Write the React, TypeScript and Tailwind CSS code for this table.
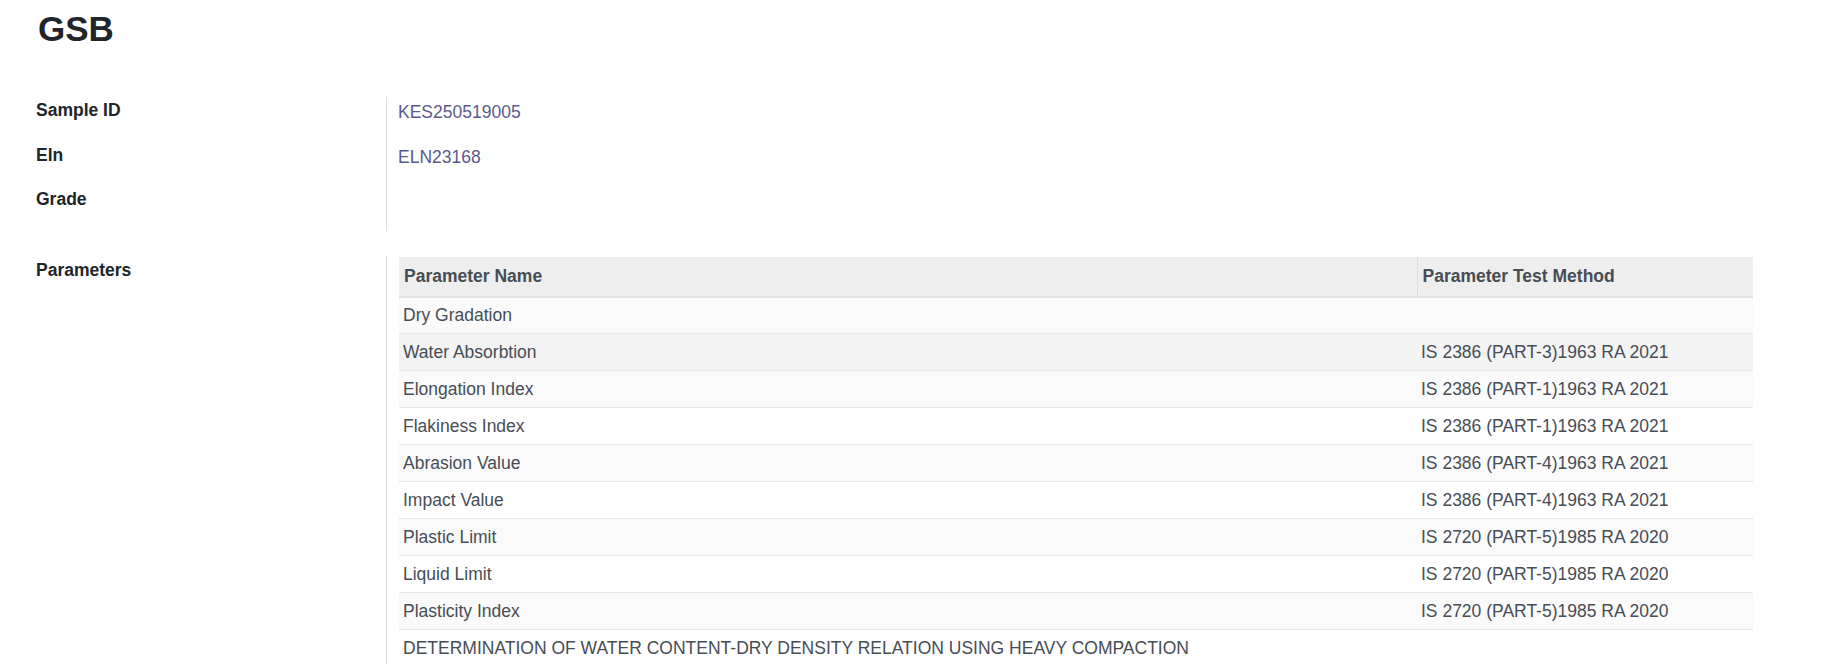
import React from "react";

const rows = [
  { name: "Dry Gradation", method: "", bg: "bg-[#fafafa]" },
  { name: "Water Absorbtion", method: "IS 2386 (PART-3)1963 RA 2021", bg: "bg-[#f3f3f3]" },
  { name: "Elongation Index", method: "IS 2386 (PART-1)1963 RA 2021", bg: "bg-[#fafafa]" },
  { name: "Flakiness Index", method: "IS 2386 (PART-1)1963 RA 2021", bg: "bg-white" },
  { name: "Abrasion Value", method: "IS 2386 (PART-4)1963 RA 2021", bg: "bg-[#fafafa]" },
  { name: "Impact Value", method: "IS 2386 (PART-4)1963 RA 2021", bg: "bg-white" },
  { name: "Plastic Limit", method: "IS 2720 (PART-5)1985 RA 2020", bg: "bg-[#fafafa]" },
  { name: "Liquid Limit", method: "IS 2720 (PART-5)1985 RA 2020", bg: "bg-white" },
  { name: "Plasticity Index", method: "IS 2720 (PART-5)1985 RA 2020", bg: "bg-[#fafafa]" },
  { name: "DETERMINATION OF WATER CONTENT-DRY DENSITY RELATION USING HEAVY COMPACTION", method: "", bg: "bg-white" },
];

function Field({ label, value }: { label: string; value?: string }) {
  return (
    <div className="flex h-[44.5px]">
      <div className="w-[350px] shrink-0 font-bold text-[#212529]">{label}</div>
      <div className="flex-1 border-l border-[#dcdcdc] pl-[11px] pt-[2px] text-[#5a5a8e]">
        {value}
      </div>
    </div>
  );
}

export default function App() {
  return (
    <div className="min-h-screen bg-white pl-[36px] pr-[72px] font-['Liberation_Sans',Arial,sans-serif] text-[17.5px] leading-[26.25px]">
      <h1 className="pl-[2px] pt-[9px] text-[35px] font-bold leading-[40px] text-[#212529]">GSB</h1>

      {/* main fields */}
      <div className="mt-[48px]">
        <Field label="Sample ID" value="KES250519005" />
        <Field label="Eln" value="ELN23168" />
        <Field label="Grade" />
      </div>

      {/* parameters */}
      <div className="mt-[25px] flex">
        <div className="w-[350px] shrink-0 pt-[1px] font-bold text-[#212529]">Parameters</div>
        <div className="flex-1 border-l border-[#dcdcdc] pl-[12px] pt-[1px]">
          <table className="w-full table-fixed border-collapse text-[#474d55]">
            <thead>
              <tr className="h-[40px] border-b-2 border-[#e3e3e3] bg-[#eeeeee]">
                <th className="w-[1018px] border-r border-[#dcdcdc] px-[5px] text-left font-bold">Parameter Name</th>
                <th className="px-[5px] text-left font-bold">Parameter Test Method</th>
              </tr>
            </thead>
            <tbody>
              {rows.map((r, i) => (
                <tr key={i} className={"h-[37px] border-b border-[#e6e6e6] " + r.bg}>
                  <td className="whitespace-nowrap px-[4px]">{r.name}</td>
                  <td className="whitespace-nowrap px-[4px]">{r.method}</td>
                </tr>
              ))}
            </tbody>
          </table>
        </div>
      </div>
    </div>
  );
}
